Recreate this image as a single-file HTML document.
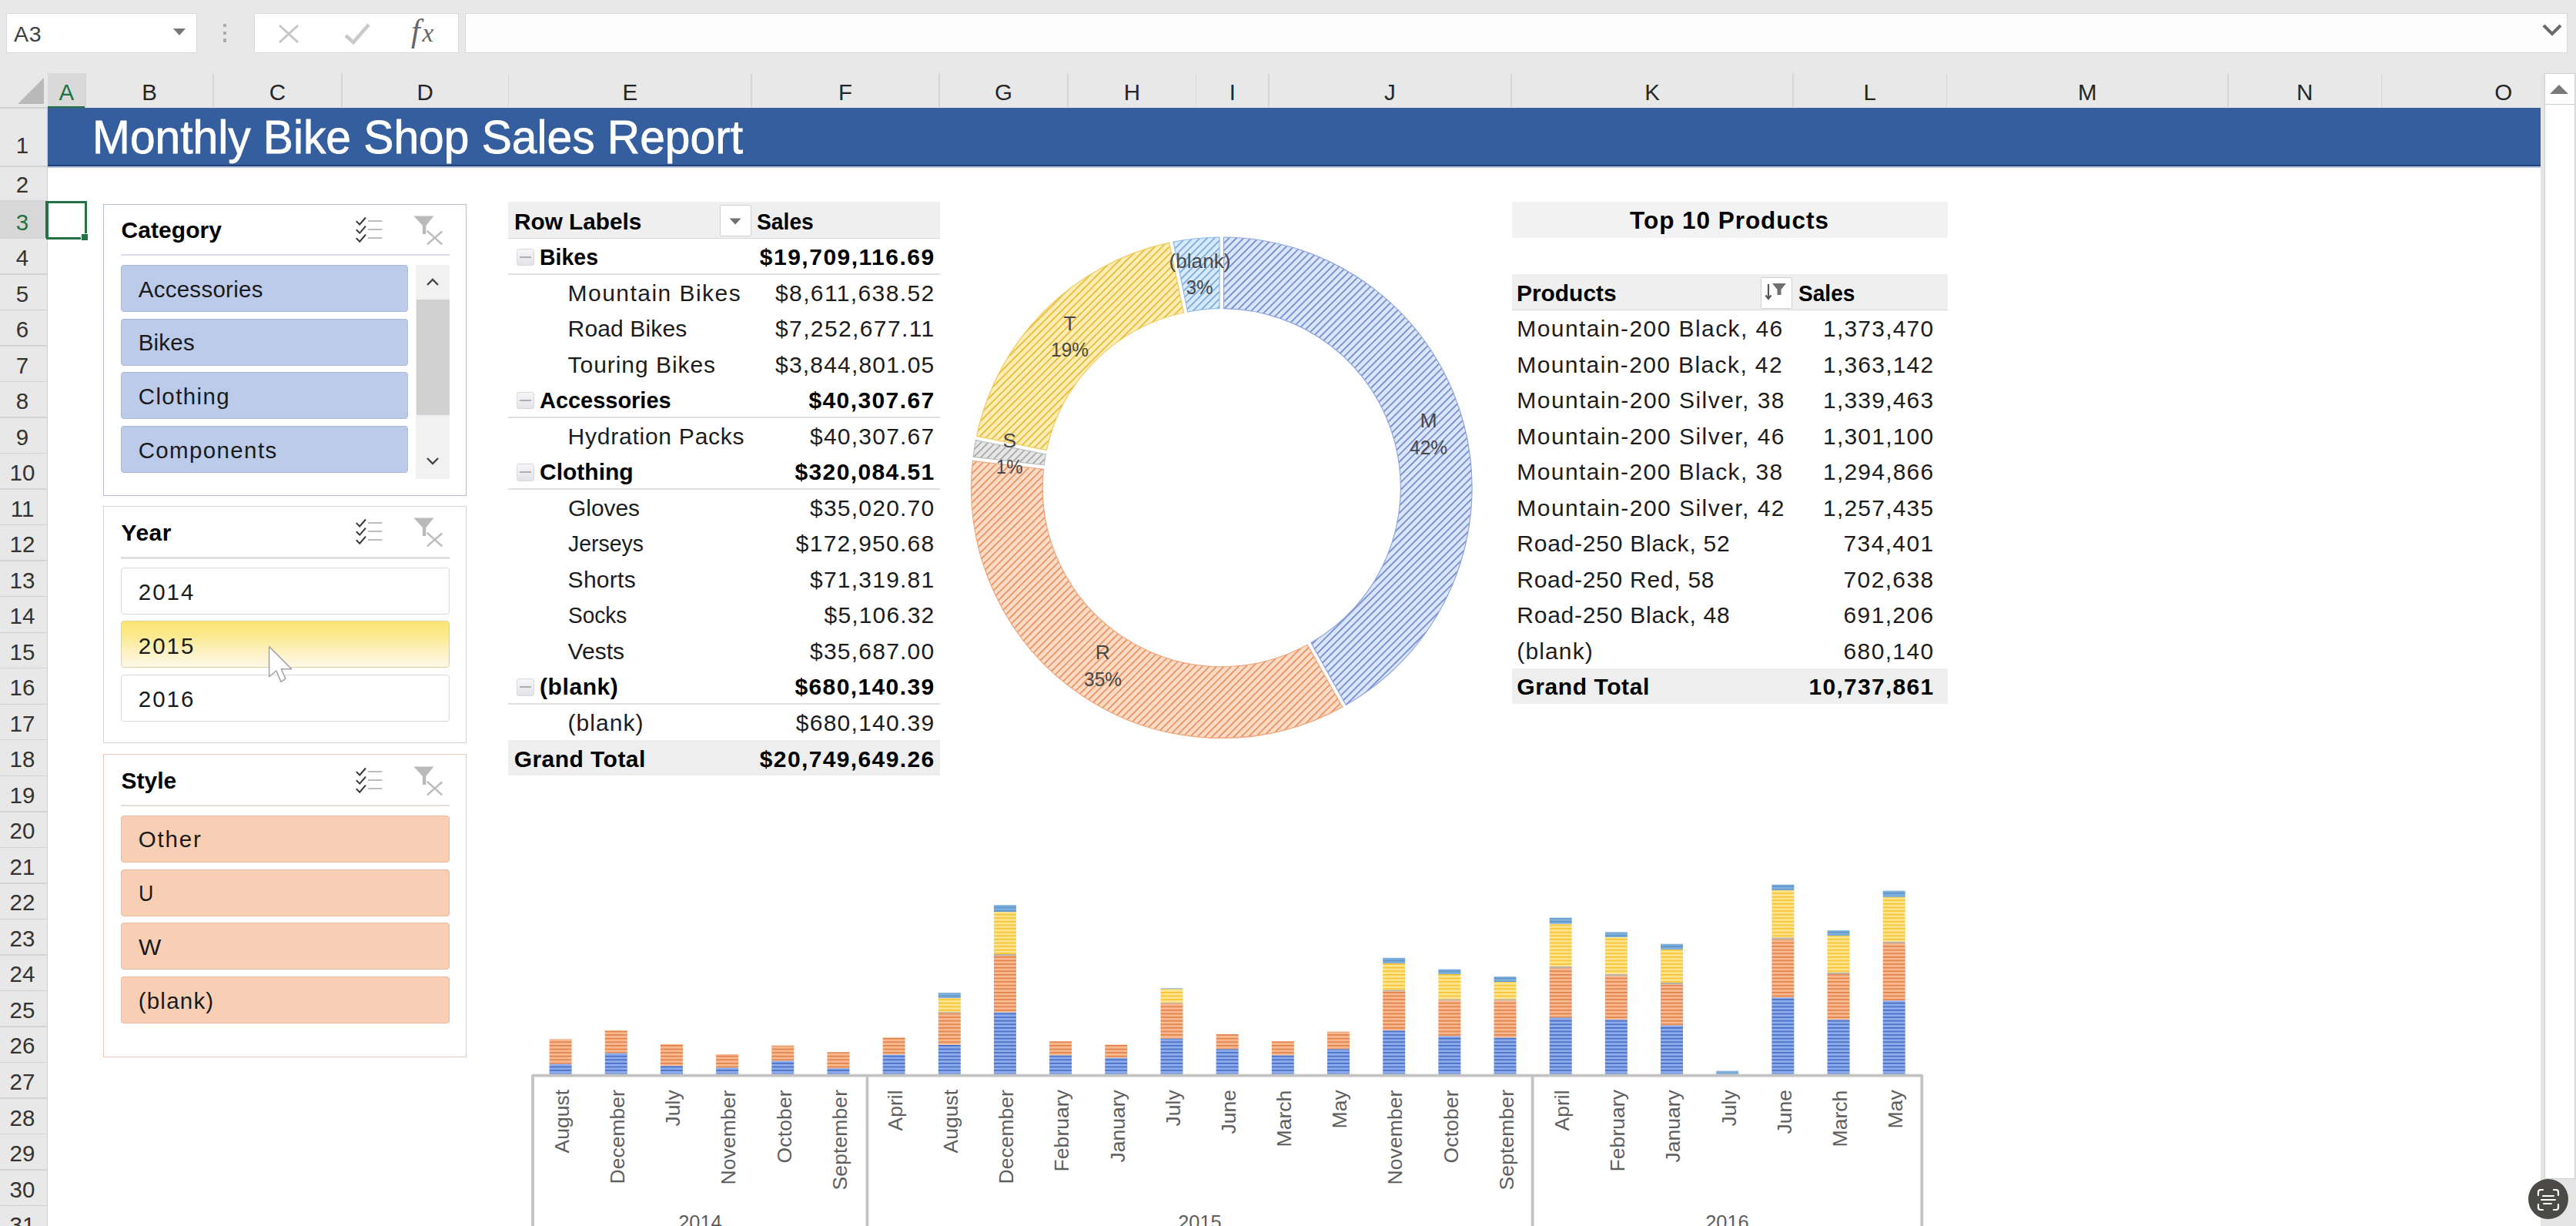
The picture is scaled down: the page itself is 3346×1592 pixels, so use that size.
<!DOCTYPE html>
<html><head><meta charset="utf-8"><title>Monthly Bike Shop Sales Report</title><style>
html,body{margin:0;padding:0;background:#fff;}
body{width:3346px;height:1592px;overflow:hidden;}
#w{position:relative;width:3346px;height:1592px;overflow:hidden;background:#fff;font-family:"Liberation Sans",sans-serif;color:#000;}
#w div,.a{position:absolute;}
.t{position:absolute;white-space:pre;line-height:1;}
</style></head><body><div id="w">
<div style="left:0.00px;top:0.00px;width:3346.00px;height:140.00px;background:#e8e8e8;"></div>
<div style="left:8.20px;top:16.60px;width:247.60px;height:52.60px;background:#fefefe;border:1.4px solid #d9d9d9;box-sizing:border-box;"></div>
<span class="t" style="top:29.62px;font-size:28.5px;left:18.00px;letter-spacing:0.640px;color:#404040;">A3</span>
<svg class="a" style="left:224px;top:36px" width="18" height="11" viewBox="0 0 18 11"><path d="M1 1h16l-8 9z" fill="#777"/></svg>
<div style="left:290.30px;top:31.00px;width:4.20px;height:4.20px;background:#ababab;border-radius:1px;"></div>
<div style="left:290.30px;top:40.60px;width:4.20px;height:4.20px;background:#ababab;border-radius:1px;"></div>
<div style="left:290.30px;top:50.40px;width:4.20px;height:4.20px;background:#ababab;border-radius:1px;"></div>
<div style="left:329.80px;top:16.60px;width:266.60px;height:52.60px;background:#fefefe;border:1.4px solid #d9d9d9;box-sizing:border-box;"></div>
<svg class="a" style="left:360px;top:30px" width="30" height="28" viewBox="0 0 30 28"><path d="M3 3L27 25M27 3L3 25" stroke="#c6c6c6" stroke-width="3" fill="none"/></svg>
<svg class="a" style="left:446px;top:29px" width="36" height="30" viewBox="0 0 36 30"><path d="M3 17L13 26L33 3" stroke="#c9c9c9" stroke-width="4.5" fill="none"/></svg>
<span class="t" style="top:19.43px;font-size:42px;left:534.00px;font-style:italic;font-family:'Liberation Serif',serif;color:#666;">f</span>
<span class="t" style="top:26.95px;font-size:33px;left:548.50px;font-style:italic;font-family:'Liberation Serif',serif;color:#666;">x</span>
<div style="left:604.20px;top:16.60px;width:2731.10px;height:52.60px;background:#fdfdfd;border:1.4px solid #d9d9d9;box-sizing:border-box;"></div>
<svg class="a" style="left:3301px;top:30px" width="28" height="18" viewBox="0 0 28 18"><path d="M3 3L14 14L25 3" stroke="#6a6a6a" stroke-width="4" fill="none"/></svg>
<div style="left:0.00px;top:95.00px;width:3300.00px;height:45.00px;background:#e8e8e8;"></div>
<svg class="a" style="left:22px;top:100px" width="36" height="36" viewBox="0 0 36 36"><path d="M35 1V35H1z" fill="#b9b9b9"/></svg>
<div style="left:61.50px;top:95.00px;width:49.50px;height:42.50px;background:#d9d9d9;"></div>
<div style="left:61.50px;top:137.50px;width:49.50px;height:2.50px;background:#217346;"></div>
<span class="t" style="top:105.03px;font-size:29.5px;left:76.41px;color:#217346;">A</span>
<div style="left:110.20px;top:95.00px;width:1.50px;height:45.00px;background:#d6d6d6;"></div>
<span class="t" style="top:105.03px;font-size:29.5px;left:184.16px;color:#262626;">B</span>
<div style="left:276.20px;top:95.00px;width:1.50px;height:45.00px;background:#d6d6d6;"></div>
<span class="t" style="top:105.03px;font-size:29.5px;left:349.85px;color:#262626;">C</span>
<div style="left:443.20px;top:95.00px;width:1.50px;height:45.00px;background:#d6d6d6;"></div>
<span class="t" style="top:105.03px;font-size:29.5px;left:541.60px;color:#262626;">D</span>
<div style="left:659.70px;top:95.00px;width:1.50px;height:45.00px;background:#d6d6d6;"></div>
<span class="t" style="top:105.03px;font-size:29.5px;left:808.41px;color:#262626;">E</span>
<div style="left:975.20px;top:95.00px;width:1.50px;height:45.00px;background:#d6d6d6;"></div>
<span class="t" style="top:105.03px;font-size:29.5px;left:1088.99px;color:#262626;">F</span>
<div style="left:1219.20px;top:95.00px;width:1.50px;height:45.00px;background:#d6d6d6;"></div>
<span class="t" style="top:105.03px;font-size:29.5px;left:1292.03px;color:#262626;">G</span>
<div style="left:1386.20px;top:95.00px;width:1.50px;height:45.00px;background:#d6d6d6;"></div>
<span class="t" style="top:105.03px;font-size:29.5px;left:1459.65px;color:#262626;">H</span>
<div style="left:1552.80px;top:95.00px;width:1.50px;height:45.00px;background:#d6d6d6;"></div>
<span class="t" style="top:105.03px;font-size:29.5px;left:1596.70px;color:#262626;">I</span>
<div style="left:1647.20px;top:95.00px;width:1.50px;height:45.00px;background:#d6d6d6;"></div>
<span class="t" style="top:105.03px;font-size:29.5px;left:1798.12px;color:#262626;">J</span>
<div style="left:1962.20px;top:95.00px;width:1.50px;height:45.00px;background:#d6d6d6;"></div>
<span class="t" style="top:105.03px;font-size:29.5px;left:2136.16px;color:#262626;">K</span>
<div style="left:2328.20px;top:95.00px;width:1.50px;height:45.00px;background:#d6d6d6;"></div>
<span class="t" style="top:105.03px;font-size:29.5px;left:2420.55px;color:#262626;">L</span>
<div style="left:2527.70px;top:95.00px;width:1.50px;height:45.00px;background:#d6d6d6;"></div>
<span class="t" style="top:105.03px;font-size:29.5px;left:2698.96px;color:#262626;">M</span>
<div style="left:2893.20px;top:95.00px;width:1.50px;height:45.00px;background:#d6d6d6;"></div>
<span class="t" style="top:105.03px;font-size:29.5px;left:2983.05px;color:#262626;">N</span>
<div style="left:3092.60px;top:95.00px;width:1.50px;height:45.00px;background:#d6d6d6;"></div>
<span class="t" style="top:105.03px;font-size:29.5px;left:3240.23px;color:#262626;">O</span>
<div style="left:0.00px;top:140.00px;width:61.50px;height:1452.00px;background:#e8e8e8;"></div>
<div style="left:60.50px;top:140.00px;width:1.20px;height:1452.00px;background:#d0d0d0;"></div>
<div style="left:0.00px;top:215.30px;width:61.50px;height:1.40px;background:#d2d2d2;"></div>
<span class="t" style="top:173.78px;font-size:29.5px;left:20.80px;color:#333;">1</span>
<div style="left:0.00px;top:260.30px;width:61.50px;height:1.40px;background:#d2d2d2;"></div>
<span class="t" style="top:225.03px;font-size:29.5px;left:20.80px;color:#333;">2</span>
<div style="left:0.00px;top:261.00px;width:60.50px;height:48.50px;background:#d7d7d7;"></div>
<div style="left:58.50px;top:261.00px;width:3.00px;height:48.50px;background:#217346;"></div>
<div style="left:0.00px;top:308.80px;width:61.50px;height:1.40px;background:#d2d2d2;"></div>
<span class="t" style="top:273.53px;font-size:29.5px;left:20.80px;color:#217346;">3</span>
<div style="left:0.00px;top:355.32px;width:61.50px;height:1.40px;background:#d2d2d2;"></div>
<span class="t" style="top:320.05px;font-size:29.5px;left:20.80px;color:#333;">4</span>
<div style="left:0.00px;top:401.84px;width:61.50px;height:1.40px;background:#d2d2d2;"></div>
<span class="t" style="top:366.57px;font-size:29.5px;left:20.80px;color:#333;">5</span>
<div style="left:0.00px;top:448.36px;width:61.50px;height:1.40px;background:#d2d2d2;"></div>
<span class="t" style="top:413.09px;font-size:29.5px;left:20.80px;color:#333;">6</span>
<div style="left:0.00px;top:494.88px;width:61.50px;height:1.40px;background:#d2d2d2;"></div>
<span class="t" style="top:459.61px;font-size:29.5px;left:20.80px;color:#333;">7</span>
<div style="left:0.00px;top:541.40px;width:61.50px;height:1.40px;background:#d2d2d2;"></div>
<span class="t" style="top:506.13px;font-size:29.5px;left:20.80px;color:#333;">8</span>
<div style="left:0.00px;top:587.92px;width:61.50px;height:1.40px;background:#d2d2d2;"></div>
<span class="t" style="top:552.65px;font-size:29.5px;left:20.80px;color:#333;">9</span>
<div style="left:0.00px;top:634.44px;width:61.50px;height:1.40px;background:#d2d2d2;"></div>
<span class="t" style="top:599.17px;font-size:29.5px;left:12.59px;color:#333;">10</span>
<div style="left:0.00px;top:680.96px;width:61.50px;height:1.40px;background:#d2d2d2;"></div>
<span class="t" style="top:645.69px;font-size:29.5px;left:13.69px;color:#333;">11</span>
<div style="left:0.00px;top:727.48px;width:61.50px;height:1.40px;background:#d2d2d2;"></div>
<span class="t" style="top:692.21px;font-size:29.5px;left:12.59px;color:#333;">12</span>
<div style="left:0.00px;top:774.00px;width:61.50px;height:1.40px;background:#d2d2d2;"></div>
<span class="t" style="top:738.73px;font-size:29.5px;left:12.59px;color:#333;">13</span>
<div style="left:0.00px;top:820.52px;width:61.50px;height:1.40px;background:#d2d2d2;"></div>
<span class="t" style="top:785.25px;font-size:29.5px;left:12.59px;color:#333;">14</span>
<div style="left:0.00px;top:867.04px;width:61.50px;height:1.40px;background:#d2d2d2;"></div>
<span class="t" style="top:831.77px;font-size:29.5px;left:12.59px;color:#333;">15</span>
<div style="left:0.00px;top:913.56px;width:61.50px;height:1.40px;background:#d2d2d2;"></div>
<span class="t" style="top:878.29px;font-size:29.5px;left:12.59px;color:#333;">16</span>
<div style="left:0.00px;top:960.08px;width:61.50px;height:1.40px;background:#d2d2d2;"></div>
<span class="t" style="top:924.81px;font-size:29.5px;left:12.59px;color:#333;">17</span>
<div style="left:0.00px;top:1006.60px;width:61.50px;height:1.40px;background:#d2d2d2;"></div>
<span class="t" style="top:971.33px;font-size:29.5px;left:12.59px;color:#333;">18</span>
<div style="left:0.00px;top:1053.12px;width:61.50px;height:1.40px;background:#d2d2d2;"></div>
<span class="t" style="top:1017.85px;font-size:29.5px;left:12.59px;color:#333;">19</span>
<div style="left:0.00px;top:1099.64px;width:61.50px;height:1.40px;background:#d2d2d2;"></div>
<span class="t" style="top:1064.37px;font-size:29.5px;left:12.59px;color:#333;">20</span>
<div style="left:0.00px;top:1146.16px;width:61.50px;height:1.40px;background:#d2d2d2;"></div>
<span class="t" style="top:1110.89px;font-size:29.5px;left:12.59px;color:#333;">21</span>
<div style="left:0.00px;top:1192.68px;width:61.50px;height:1.40px;background:#d2d2d2;"></div>
<span class="t" style="top:1157.41px;font-size:29.5px;left:12.59px;color:#333;">22</span>
<div style="left:0.00px;top:1239.20px;width:61.50px;height:1.40px;background:#d2d2d2;"></div>
<span class="t" style="top:1203.93px;font-size:29.5px;left:12.59px;color:#333;">23</span>
<div style="left:0.00px;top:1285.72px;width:61.50px;height:1.40px;background:#d2d2d2;"></div>
<span class="t" style="top:1250.45px;font-size:29.5px;left:12.59px;color:#333;">24</span>
<div style="left:0.00px;top:1332.24px;width:61.50px;height:1.40px;background:#d2d2d2;"></div>
<span class="t" style="top:1296.97px;font-size:29.5px;left:12.59px;color:#333;">25</span>
<div style="left:0.00px;top:1378.76px;width:61.50px;height:1.40px;background:#d2d2d2;"></div>
<span class="t" style="top:1343.49px;font-size:29.5px;left:12.59px;color:#333;">26</span>
<div style="left:0.00px;top:1425.28px;width:61.50px;height:1.40px;background:#d2d2d2;"></div>
<span class="t" style="top:1390.01px;font-size:29.5px;left:12.59px;color:#333;">27</span>
<div style="left:0.00px;top:1471.80px;width:61.50px;height:1.40px;background:#d2d2d2;"></div>
<span class="t" style="top:1436.53px;font-size:29.5px;left:12.59px;color:#333;">28</span>
<div style="left:0.00px;top:1518.32px;width:61.50px;height:1.40px;background:#d2d2d2;"></div>
<span class="t" style="top:1483.05px;font-size:29.5px;left:12.59px;color:#333;">29</span>
<div style="left:0.00px;top:1564.84px;width:61.50px;height:1.40px;background:#d2d2d2;"></div>
<span class="t" style="top:1529.57px;font-size:29.5px;left:12.59px;color:#333;">30</span>
<div style="left:0.00px;top:1611.36px;width:61.50px;height:1.40px;background:#d2d2d2;"></div>
<span class="t" style="top:1576.09px;font-size:29.5px;left:12.59px;color:#333;">31</span>
<div style="left:0.00px;top:139.40px;width:61.50px;height:1.40px;background:#cfcfcf;"></div>
<div style="left:61.50px;top:140.00px;width:3238.50px;height:1452.00px;background:#fff;"></div>
<div style="left:111.00px;top:138.80px;width:3189.00px;height:1.60px;background:#e3e6ef;"></div>
<div style="left:61.50px;top:140.20px;width:3238.50px;height:75.80px;background:#355e9e;"></div>
<div style="left:61.50px;top:140.20px;width:3238.50px;height:1.40px;background:#3d5f94;"></div>
<div style="left:61.50px;top:213.50px;width:3238.50px;height:2.50px;background:#1f3f75;"></div>
<div style="left:61.50px;top:216.00px;width:3238.50px;height:1.50px;background:#b8c8e4;"></div>
<span class="t" style="top:148.36px;font-size:61px;left:119.50px;transform:scaleX(0.9622);transform-origin:left center;color:#fff;-webkit-text-stroke:0.8px #fff;">Monthly Bike Shop Sales Report</span>
<div style="left:59.50px;top:260.50px;width:53.50px;height:50.50px;border:3px solid #217346;box-sizing:border-box;"></div>
<div style="left:104.50px;top:303.00px;width:10.00px;height:10.00px;background:#217346;border:1.5px solid #fff;box-sizing:border-box;"></div>
<div style="left:134.40px;top:264.90px;width:471.40px;height:378.90px;background:#fff;border:1.7px solid #b5bcda;box-sizing:border-box;"></div>
<span class="t" style="top:284.40px;font-size:30px;left:157.50px;letter-spacing:0.066px;font-weight:bold;">Category</span>
<svg class="a" style="left:462.4px;top:280.5px" width="37" height="36" viewBox="0 0 37 36"><path d="M0.8 6.1L5.2 10.5L13 1.5M0.8 17.2L5.2 21.6L13 12.6M0.8 28.3L5.2 32.7L13 23.7" stroke="#383838" stroke-width="2" fill="none"/><path d="M16 6.1H34.4M16 17H34.4M16 27.9H34.4" stroke="#bcbcbc" stroke-width="2" fill="none"/></svg>
<svg class="a" style="left:537.4px;top:279.5px" width="40" height="40" viewBox="0 0 40 40"><path d="M0.4 0.6H26.5L16.3 13V23.9H11.9V13z" fill="#b9b9b9"/><path d="M17.8 19.8L37.2 37.4M37.2 20.5L17.8 37.4" stroke="#bbbbbb" stroke-width="2.4" fill="none"/></svg>
<div style="left:157.00px;top:329.80px;width:427.00px;height:2.60px;background:#d9dbeb;"></div>
<div style="left:157.00px;top:343.70px;width:373.00px;height:61.20px;background:#bccbea;border:1.3px solid #abb8db;box-sizing:border-box;border-radius:4px;"></div>
<span class="t" style="top:360.53px;font-size:29.5px;left:179.70px;letter-spacing:0.273px;color:#1a1a1a;">Accessories</span>
<div style="left:157.00px;top:413.50px;width:373.00px;height:61.20px;background:#bccbea;border:1.3px solid #abb8db;box-sizing:border-box;border-radius:4px;"></div>
<span class="t" style="top:430.33px;font-size:29.5px;left:179.70px;letter-spacing:0.216px;color:#1a1a1a;">Bikes</span>
<div style="left:157.00px;top:483.30px;width:373.00px;height:61.20px;background:#bccbea;border:1.3px solid #abb8db;box-sizing:border-box;border-radius:4px;"></div>
<span class="t" style="top:500.13px;font-size:29.5px;left:179.70px;letter-spacing:1.395px;color:#1a1a1a;">Clothing</span>
<div style="left:157.00px;top:553.10px;width:373.00px;height:61.20px;background:#bccbea;border:1.3px solid #abb8db;box-sizing:border-box;border-radius:4px;"></div>
<span class="t" style="top:569.93px;font-size:29.5px;left:179.70px;letter-spacing:1.360px;color:#1a1a1a;">Components</span>
<div style="left:540.00px;top:343.50px;width:44.00px;height:278.00px;background:#f1f1f1;"></div>
<div style="left:540.50px;top:389.00px;width:43.00px;height:149.50px;background:#d1d1d1;"></div>
<svg class="a" style="left:553px;top:360px" width="18" height="12" viewBox="0 0 18 12"><path d="M2 10L9 3L16 10" stroke="#444" stroke-width="2.4" fill="none"/></svg>
<svg class="a" style="left:553px;top:593px" width="18" height="12" viewBox="0 0 18 12"><path d="M2 2L9 9L16 2" stroke="#444" stroke-width="2.4" fill="none"/></svg>
<div style="left:134.40px;top:657.40px;width:471.40px;height:308.10px;background:#fff;border:1.7px solid #d3d3da;box-sizing:border-box;"></div>
<span class="t" style="top:676.61px;font-size:30px;left:157.50px;letter-spacing:0.534px;font-weight:bold;">Year</span>
<svg class="a" style="left:462.4px;top:673.2px" width="37" height="36" viewBox="0 0 37 36"><path d="M0.8 6.1L5.2 10.5L13 1.5M0.8 17.2L5.2 21.6L13 12.6M0.8 28.3L5.2 32.7L13 23.7" stroke="#383838" stroke-width="2" fill="none"/><path d="M16 6.1H34.4M16 17H34.4M16 27.9H34.4" stroke="#bcbcbc" stroke-width="2" fill="none"/></svg>
<svg class="a" style="left:537.4px;top:672.2px" width="40" height="40" viewBox="0 0 40 40"><path d="M0.4 0.6H26.5L16.3 13V23.9H11.9V13z" fill="#b9b9b9"/><path d="M17.8 19.8L37.2 37.4M37.2 20.5L17.8 37.4" stroke="#bbbbbb" stroke-width="2.4" fill="none"/></svg>
<div style="left:157.00px;top:723.20px;width:427.00px;height:2.60px;background:#e0e0e0;"></div>
<div style="left:157.00px;top:736.50px;width:427.20px;height:61.20px;background:#fff;border:1.3px solid #d9d9d9;box-sizing:border-box;border-radius:4px;"></div>
<span class="t" style="top:753.83px;font-size:29.5px;left:179.70px;letter-spacing:2.041px;color:#1a1a1a;">2014</span>
<div style="left:157.00px;top:806.30px;width:427.20px;height:61.20px;border:1.3px solid #dcd09c;box-sizing:border-box;border-radius:4px;background:linear-gradient(#fae676 0%,#fbe98c 30%,#fdf3cd 75%,#fdf7e6 100%);"></div>
<span class="t" style="top:823.63px;font-size:29.5px;left:179.70px;letter-spacing:2.041px;color:#1a1a1a;">2015</span>
<div style="left:157.00px;top:876.10px;width:427.20px;height:61.20px;background:#fff;border:1.3px solid #d9d9d9;box-sizing:border-box;border-radius:4px;"></div>
<span class="t" style="top:893.43px;font-size:29.5px;left:179.70px;letter-spacing:2.041px;color:#1a1a1a;">2016</span>
<div style="left:134.40px;top:979.40px;width:471.40px;height:393.80px;background:#fff;border:1.7px solid #f1c5b3;box-sizing:border-box;"></div>
<span class="t" style="top:999.01px;font-size:30px;left:157.50px;letter-spacing:0.011px;font-weight:bold;">Style</span>
<svg class="a" style="left:462.4px;top:996.4px" width="37" height="36" viewBox="0 0 37 36"><path d="M0.8 6.1L5.2 10.5L13 1.5M0.8 17.2L5.2 21.6L13 12.6M0.8 28.3L5.2 32.7L13 23.7" stroke="#383838" stroke-width="2" fill="none"/><path d="M16 6.1H34.4M16 17H34.4M16 27.9H34.4" stroke="#bcbcbc" stroke-width="2" fill="none"/></svg>
<svg class="a" style="left:537.4px;top:995.4px" width="40" height="40" viewBox="0 0 40 40"><path d="M0.4 0.6H26.5L16.3 13V23.9H11.9V13z" fill="#b9b9b9"/><path d="M17.8 19.8L37.2 37.4M37.2 20.5L17.8 37.4" stroke="#bbbbbb" stroke-width="2.4" fill="none"/></svg>
<div style="left:157.00px;top:1044.90px;width:427.00px;height:2.60px;background:#e8dcd8;"></div>
<div style="left:157.00px;top:1058.70px;width:427.20px;height:61.20px;background:#f8cfb4;border:1.3px solid #eab9a0;box-sizing:border-box;border-radius:4px;"></div>
<span class="t" style="top:1075.13px;font-size:29.5px;left:179.70px;letter-spacing:1.868px;color:#1a1a1a;">Other</span>
<div style="left:157.00px;top:1128.50px;width:427.20px;height:61.20px;background:#f8cfb4;border:1.3px solid #eab9a0;box-sizing:border-box;border-radius:4px;"></div>
<span class="t" style="top:1144.93px;font-size:29.5px;left:179.70px;transform:scaleX(0.9106);transform-origin:left center;color:#1a1a1a;">U</span>
<div style="left:157.00px;top:1198.30px;width:427.20px;height:61.20px;background:#f8cfb4;border:1.3px solid #eab9a0;box-sizing:border-box;border-radius:4px;"></div>
<span class="t" style="top:1214.73px;font-size:29.5px;left:179.70px;transform:scaleX(1.0523);transform-origin:left center;color:#1a1a1a;">W</span>
<div style="left:157.00px;top:1268.10px;width:427.20px;height:61.20px;background:#f8cfb4;border:1.3px solid #eab9a0;box-sizing:border-box;border-radius:4px;"></div>
<span class="t" style="top:1284.53px;font-size:29.5px;left:179.70px;letter-spacing:1.221px;color:#1a1a1a;">(blank)</span>
<svg class="a" style="left:346px;top:838px" width="38" height="52" viewBox="0 0 38 52"><path d="M3.6 1.6V40.8L12.8 33L19 47.4L24.9 43.4L19.3 30.7H32.7z" fill="#fff" stroke="#a2a2a2" stroke-width="1.5" stroke-linejoin="round"/></svg>
<div style="left:660.20px;top:262.20px;width:560.50px;height:47.30px;background:#efefef;"></div>
<div style="left:660.20px;top:308.70px;width:560.50px;height:1.60px;background:#d9d9d9;"></div>
<span class="t" style="top:272.71px;font-size:30px;left:667.70px;transform:scaleX(0.9922);transform-origin:left center;font-weight:bold;">Row Labels</span>
<div style="left:934.60px;top:266.00px;width:41.40px;height:41.00px;background:#fff;border:1.3px solid #d0d0d0;box-sizing:border-box;border-radius:2px;"></div>
<svg class="a" style="left:947px;top:283px" width="16" height="9" viewBox="0 0 16 9"><path d="M0.5 0.5h15l-7.5 8z" fill="#707070"/></svg>
<span class="t" style="top:272.71px;font-size:30px;left:983.20px;transform:scaleX(0.9413);transform-origin:left center;font-weight:bold;">Sales</span>
<div style="left:671.20px;top:322.80px;width:22.60px;height:22.60px;border:1.3px solid #d8d8de;box-sizing:border-box;border-radius:3px;background:linear-gradient(#f6f6f8,#e3e3e8);"></div>
<div style="left:675.00px;top:333.10px;width:15.00px;height:1.80px;background:#adadb2;"></div>
<span class="t" style="top:319.23px;font-size:30px;left:701.00px;transform:scaleX(0.9494);transform-origin:left center;font-weight:bold;">Bikes</span>
<span class="t" style="top:319.23px;font-size:30px;left:986.80px;letter-spacing:1.501px;font-weight:bold;">$19,709,116.69</span>
<div style="left:660.20px;top:355.22px;width:560.50px;height:1.80px;background:#e0e0e0;"></div>
<span class="t" style="top:365.75px;font-size:30px;left:737.60px;letter-spacing:1.461px;color:#1c1c1c;">Mountain Bikes</span>
<span class="t" style="top:365.75px;font-size:30px;left:1007.00px;letter-spacing:1.381px;color:#1c1c1c;">$8,611,638.52</span>
<span class="t" style="top:412.27px;font-size:30px;left:737.60px;letter-spacing:0.132px;color:#1c1c1c;">Road Bikes</span>
<span class="t" style="top:412.27px;font-size:30px;left:1007.00px;letter-spacing:1.381px;color:#1c1c1c;">$7,252,677.11</span>
<span class="t" style="top:458.79px;font-size:30px;left:737.60px;letter-spacing:0.951px;color:#1c1c1c;">Touring Bikes</span>
<span class="t" style="top:458.79px;font-size:30px;left:1007.00px;letter-spacing:1.196px;color:#1c1c1c;">$3,844,801.05</span>
<div style="left:671.20px;top:508.88px;width:22.60px;height:22.60px;border:1.3px solid #d8d8de;box-sizing:border-box;border-radius:3px;background:linear-gradient(#f6f6f8,#e3e3e8);"></div>
<div style="left:675.00px;top:519.18px;width:15.00px;height:1.80px;background:#adadb2;"></div>
<span class="t" style="top:505.31px;font-size:30px;left:701.00px;transform:scaleX(0.9650);transform-origin:left center;font-weight:bold;">Accessories</span>
<span class="t" style="top:505.31px;font-size:30px;left:1050.40px;letter-spacing:1.406px;font-weight:bold;">$40,307.67</span>
<div style="left:660.20px;top:541.30px;width:560.50px;height:1.80px;background:#e0e0e0;"></div>
<span class="t" style="top:551.83px;font-size:30px;left:737.60px;letter-spacing:0.755px;color:#1c1c1c;">Hydration Packs</span>
<span class="t" style="top:551.83px;font-size:30px;left:1052.00px;letter-spacing:1.228px;color:#1c1c1c;">$40,307.67</span>
<div style="left:671.20px;top:601.92px;width:22.60px;height:22.60px;border:1.3px solid #d8d8de;box-sizing:border-box;border-radius:3px;background:linear-gradient(#f6f6f8,#e3e3e8);"></div>
<div style="left:675.00px;top:612.22px;width:15.00px;height:1.80px;background:#adadb2;"></div>
<span class="t" style="top:598.35px;font-size:30px;left:701.00px;font-weight:bold;">Clothing</span>
<span class="t" style="top:598.35px;font-size:30px;left:1032.40px;letter-spacing:1.397px;font-weight:bold;">$320,084.51</span>
<div style="left:660.20px;top:634.34px;width:560.50px;height:1.80px;background:#e0e0e0;"></div>
<span class="t" style="top:644.87px;font-size:30px;left:737.60px;transform:scaleX(0.9960);transform-origin:left center;color:#1c1c1c;">Gloves</span>
<span class="t" style="top:644.87px;font-size:30px;left:1052.00px;letter-spacing:1.228px;color:#1c1c1c;">$35,020.70</span>
<span class="t" style="top:691.39px;font-size:30px;left:737.60px;transform:scaleX(0.9472);transform-origin:left center;color:#1c1c1c;">Jerseys</span>
<span class="t" style="top:691.39px;font-size:30px;left:1033.80px;letter-spacing:1.257px;color:#1c1c1c;">$172,950.68</span>
<span class="t" style="top:737.91px;font-size:30px;left:737.60px;letter-spacing:0.279px;color:#1c1c1c;">Shorts</span>
<span class="t" style="top:737.91px;font-size:30px;left:1052.00px;letter-spacing:1.228px;color:#1c1c1c;">$71,319.81</span>
<span class="t" style="top:784.43px;font-size:30px;left:737.60px;transform:scaleX(0.9340);transform-origin:left center;color:#1c1c1c;">Socks</span>
<span class="t" style="top:784.43px;font-size:30px;left:1070.60px;letter-spacing:1.142px;color:#1c1c1c;">$5,106.32</span>
<span class="t" style="top:830.95px;font-size:30px;left:737.60px;color:#1c1c1c;">Vests</span>
<span class="t" style="top:830.95px;font-size:30px;left:1052.00px;letter-spacing:1.228px;color:#1c1c1c;">$35,687.00</span>
<div style="left:671.20px;top:881.04px;width:22.60px;height:22.60px;border:1.3px solid #d8d8de;box-sizing:border-box;border-radius:3px;background:linear-gradient(#f6f6f8,#e3e3e8);"></div>
<div style="left:675.00px;top:891.34px;width:15.00px;height:1.80px;background:#adadb2;"></div>
<span class="t" style="top:877.47px;font-size:30px;left:701.00px;letter-spacing:0.577px;font-weight:bold;">(blank)</span>
<span class="t" style="top:877.47px;font-size:30px;left:1032.40px;letter-spacing:1.397px;font-weight:bold;">$680,140.39</span>
<div style="left:660.20px;top:913.46px;width:560.50px;height:1.80px;background:#e0e0e0;"></div>
<span class="t" style="top:923.99px;font-size:30px;left:737.60px;letter-spacing:1.033px;color:#1c1c1c;">(blank)</span>
<span class="t" style="top:923.99px;font-size:30px;left:1033.80px;letter-spacing:1.257px;color:#1c1c1c;">$680,140.39</span>
<div style="left:660.20px;top:960.78px;width:560.50px;height:46.52px;background:#eeeeee;"></div>
<span class="t" style="top:970.51px;font-size:30px;left:667.70px;letter-spacing:0.449px;font-weight:bold;">Grand Total</span>
<span class="t" style="top:970.51px;font-size:30px;left:986.80px;letter-spacing:1.374px;font-weight:bold;">$20,749,649.26</span>
<div style="left:1963.50px;top:262.20px;width:566.20px;height:47.30px;background:#f2f2f2;"></div>
<span class="t" style="top:271.44px;font-size:31.5px;left:2117.10px;letter-spacing:0.954px;font-weight:bold;">Top 10 Products</span>
<div style="left:1963.50px;top:355.52px;width:566.20px;height:47.00px;background:#efefef;"></div>
<div style="left:1963.50px;top:401.74px;width:566.20px;height:1.60px;background:#d9d9d9;"></div>
<span class="t" style="top:365.75px;font-size:30px;left:1970.30px;transform:scaleX(0.9968);transform-origin:left center;font-weight:bold;">Products</span>
<div style="left:2286.90px;top:359.80px;width:41.40px;height:41.00px;background:#fff;border:1.3px solid #d0d0d0;box-sizing:border-box;border-radius:2px;"></div>
<svg class="a" style="left:2292px;top:366px" width="32" height="28" viewBox="0 0 32 28"><path d="M5 3V21M1.5 17.5L5 22L8.5 17.5" stroke="#555" stroke-width="2.2" fill="none"/><path d="M10 2H28L21.5 10V17H16.5V10z" fill="#707070"/></svg>
<span class="t" style="top:365.75px;font-size:30px;left:2335.50px;transform:scaleX(0.9362);transform-origin:left center;font-weight:bold;">Sales</span>
<span class="t" style="top:412.27px;font-size:30px;left:1970.30px;letter-spacing:1.419px;color:#1c1c1c;">Mountain-200 Black, 46</span>
<span class="t" style="top:412.27px;font-size:30px;left:2368.10px;letter-spacing:1.192px;color:#1c1c1c;">1,373,470</span>
<span class="t" style="top:458.79px;font-size:30px;left:1970.30px;letter-spacing:1.386px;color:#1c1c1c;">Mountain-200 Black, 42</span>
<span class="t" style="top:458.79px;font-size:30px;left:2368.10px;letter-spacing:1.192px;color:#1c1c1c;">1,363,142</span>
<span class="t" style="top:505.31px;font-size:30px;left:1970.30px;letter-spacing:1.455px;color:#1c1c1c;">Mountain-200 Silver, 38</span>
<span class="t" style="top:505.31px;font-size:30px;left:2368.10px;letter-spacing:1.192px;color:#1c1c1c;">1,339,463</span>
<span class="t" style="top:551.83px;font-size:30px;left:1970.30px;letter-spacing:1.455px;color:#1c1c1c;">Mountain-200 Silver, 46</span>
<span class="t" style="top:551.83px;font-size:30px;left:2368.10px;letter-spacing:1.192px;color:#1c1c1c;">1,301,100</span>
<span class="t" style="top:598.35px;font-size:30px;left:1970.30px;letter-spacing:1.419px;color:#1c1c1c;">Mountain-200 Black, 38</span>
<span class="t" style="top:598.35px;font-size:30px;left:2368.10px;letter-spacing:1.192px;color:#1c1c1c;">1,294,866</span>
<span class="t" style="top:644.87px;font-size:30px;left:1970.30px;letter-spacing:1.455px;color:#1c1c1c;">Mountain-200 Silver, 42</span>
<span class="t" style="top:644.87px;font-size:30px;left:2368.10px;letter-spacing:1.192px;color:#1c1c1c;">1,257,435</span>
<span class="t" style="top:691.39px;font-size:30px;left:1970.30px;letter-spacing:0.759px;color:#1c1c1c;">Road-250 Black, 52</span>
<span class="t" style="top:691.39px;font-size:30px;left:2394.60px;letter-spacing:1.343px;color:#1c1c1c;">734,401</span>
<span class="t" style="top:737.91px;font-size:30px;left:1970.30px;letter-spacing:0.735px;color:#1c1c1c;">Road-250 Red, 58</span>
<span class="t" style="top:737.91px;font-size:30px;left:2394.60px;letter-spacing:1.343px;color:#1c1c1c;">702,638</span>
<span class="t" style="top:784.43px;font-size:30px;left:1970.30px;letter-spacing:0.759px;color:#1c1c1c;">Road-250 Black, 48</span>
<span class="t" style="top:784.43px;font-size:30px;left:2394.60px;letter-spacing:1.343px;color:#1c1c1c;">691,206</span>
<span class="t" style="top:830.95px;font-size:30px;left:1970.30px;letter-spacing:1.133px;color:#1c1c1c;">(blank)</span>
<span class="t" style="top:830.95px;font-size:30px;left:2394.60px;letter-spacing:1.343px;color:#1c1c1c;">680,140</span>
<div style="left:1963.50px;top:867.74px;width:566.20px;height:46.52px;background:#eeeeee;"></div>
<span class="t" style="top:877.47px;font-size:30px;left:1970.30px;letter-spacing:0.589px;font-weight:bold;">Grand Total</span>
<span class="t" style="top:877.47px;font-size:30px;left:2349.60px;letter-spacing:1.261px;font-weight:bold;">10,737,861</span>
<svg class="a" style="left:0;top:0" width="3346" height="1592" viewBox="0 0 3346 1592"><defs><pattern id="hM" width="6.7" height="6.7" patternUnits="userSpaceOnUse" patternTransform="rotate(-45)"><rect width="6.7" height="6.7" fill="#dbe5fb"/><rect width="6.7" height="1.6" fill="#6684cc"/></pattern><pattern id="hR" width="6.7" height="6.7" patternUnits="userSpaceOnUse" patternTransform="rotate(-45)"><rect width="6.7" height="6.7" fill="#fcdcc8"/><rect width="6.7" height="1.6" fill="#e88a50"/></pattern><pattern id="hS" width="6.7" height="6.7" patternUnits="userSpaceOnUse" patternTransform="rotate(-45)"><rect width="6.7" height="6.7" fill="#e6e6e6"/><rect width="6.7" height="1.6" fill="#a0a0a0"/></pattern><pattern id="hT" width="6.7" height="6.7" patternUnits="userSpaceOnUse" patternTransform="rotate(-45)"><rect width="6.7" height="6.7" fill="#feeeb4"/><rect width="6.7" height="1.6" fill="#e6b52c"/></pattern><pattern id="hB" width="6.7" height="6.7" patternUnits="userSpaceOnUse" patternTransform="rotate(-45)"><rect width="6.7" height="6.7" fill="#d8e9fa"/><rect width="6.7" height="1.6" fill="#6ea4d8"/></pattern><pattern id="sM" width="8" height="4.6" patternUnits="userSpaceOnUse"><rect width="8" height="4.6" fill="#8eabeb"/><rect width="8" height="1.5" fill="#3f66c0"/></pattern><pattern id="sR" width="8" height="4.6" patternUnits="userSpaceOnUse"><rect width="8" height="4.6" fill="#f8b991"/><rect width="8" height="1.5" fill="#e07a40"/></pattern><pattern id="sT" width="8" height="4.6" patternUnits="userSpaceOnUse"><rect width="8" height="4.6" fill="#ffe48c"/><rect width="8" height="1.5" fill="#f4be28"/></pattern><pattern id="sB" width="8" height="4.6" patternUnits="userSpaceOnUse"><rect width="8" height="4.6" fill="#7fb0dc"/><rect width="8" height="1.5" fill="#5b92c8"/></pattern></defs><path d="M1589.50 308.00A325.2 325.2 0 0 1 1748.30 915.48L1702.94 834.63A232.5 232.5 0 0 0 1589.50 400.70Z" fill="url(#hM)" stroke="#8ea6de" stroke-width="1.2"/><path d="M1743.59 918.12A325.2 325.2 0 0 1 1263.44 598.50L1355.53 609.16A232.5 232.5 0 0 0 1698.23 837.28Z" fill="url(#hR)" stroke="#f0a57a" stroke-width="1.2"/><path d="M1264.07 593.14A325.2 325.2 0 0 1 1267.48 571.57L1358.35 589.89A232.5 232.5 0 0 0 1356.15 603.80Z" fill="url(#hS)" stroke="#bdbdbd" stroke-width="1.2"/><path d="M1268.55 566.28A325.2 325.2 0 0 1 1518.76 315.19L1537.40 405.99A232.5 232.5 0 0 0 1359.42 584.60Z" fill="url(#hT)" stroke="#efcb5e" stroke-width="1.2"/><path d="M1524.05 314.10A325.2 325.2 0 0 1 1584.10 308.00L1584.10 400.70A232.5 232.5 0 0 0 1542.69 404.91Z" fill="url(#hB)" stroke="#93bce4" stroke-width="1.2"/><rect x="713.59" y="1381.50" width="29" height="13.20" fill="url(#sM)"/><rect x="713.59" y="1349.40" width="29" height="32.10" fill="url(#sR)"/><rect x="785.76" y="1367.40" width="29" height="27.30" fill="url(#sM)"/><rect x="785.76" y="1338.10" width="29" height="29.30" fill="url(#sR)"/><rect x="857.93" y="1383.90" width="29" height="10.80" fill="url(#sM)"/><rect x="857.93" y="1355.80" width="29" height="28.10" fill="url(#sR)"/><rect x="930.10" y="1386.30" width="29" height="8.40" fill="url(#sM)"/><rect x="930.10" y="1369.00" width="29" height="17.30" fill="url(#sR)"/><rect x="1002.27" y="1377.40" width="29" height="17.30" fill="url(#sM)"/><rect x="1002.27" y="1357.70" width="29" height="19.70" fill="url(#sR)"/><rect x="1074.45" y="1387.10" width="29" height="7.60" fill="url(#sM)"/><rect x="1074.45" y="1366.20" width="29" height="20.90" fill="url(#sR)"/><rect x="1146.62" y="1369.40" width="29" height="25.30" fill="url(#sM)"/><rect x="1146.62" y="1347.30" width="29" height="22.10" fill="url(#sR)"/><rect x="1218.79" y="1356.60" width="29" height="38.10" fill="url(#sM)"/><rect x="1218.79" y="1315.30" width="29" height="41.30" fill="url(#sR)"/><rect x="1218.79" y="1313.80" width="29" height="1.50" fill="#b9b0a0"/><rect x="1218.79" y="1296.00" width="29" height="17.80" fill="url(#sT)"/><rect x="1218.79" y="1289.20" width="29" height="6.80" fill="url(#sB)"/><rect x="1290.96" y="1314.40" width="29" height="80.30" fill="url(#sM)"/><rect x="1290.96" y="1241.00" width="29" height="73.40" fill="url(#sR)"/><rect x="1290.96" y="1239.00" width="29" height="2.00" fill="#b9b0a0"/><rect x="1290.96" y="1184.00" width="29" height="55.00" fill="url(#sT)"/><rect x="1290.96" y="1175.20" width="29" height="8.80" fill="url(#sB)"/><rect x="1363.13" y="1370.20" width="29" height="24.50" fill="url(#sM)"/><rect x="1363.13" y="1352.10" width="29" height="18.10" fill="url(#sR)"/><rect x="1435.31" y="1373.40" width="29" height="21.30" fill="url(#sM)"/><rect x="1435.31" y="1356.50" width="29" height="16.90" fill="url(#sR)"/><rect x="1507.48" y="1348.50" width="29" height="46.20" fill="url(#sM)"/><rect x="1507.48" y="1303.10" width="29" height="45.40" fill="url(#sR)"/><rect x="1507.48" y="1302.10" width="29" height="1.00" fill="#b9b0a0"/><rect x="1507.48" y="1284.20" width="29" height="17.90" fill="url(#sT)"/><rect x="1507.48" y="1283.40" width="29" height="0.80" fill="url(#sB)"/><rect x="1579.65" y="1362.20" width="29" height="32.50" fill="url(#sM)"/><rect x="1579.65" y="1342.90" width="29" height="19.30" fill="url(#sR)"/><rect x="1651.82" y="1370.20" width="29" height="24.50" fill="url(#sM)"/><rect x="1651.82" y="1352.10" width="29" height="18.10" fill="url(#sR)"/><rect x="1723.99" y="1362.20" width="29" height="32.50" fill="url(#sM)"/><rect x="1723.99" y="1339.70" width="29" height="22.50" fill="url(#sR)"/><rect x="1796.17" y="1338.10" width="29" height="56.60" fill="url(#sM)"/><rect x="1796.17" y="1287.10" width="29" height="51.00" fill="url(#sR)"/><rect x="1796.17" y="1285.30" width="29" height="1.80" fill="#b9b0a0"/><rect x="1796.17" y="1251.00" width="29" height="34.30" fill="url(#sT)"/><rect x="1796.17" y="1243.80" width="29" height="7.20" fill="url(#sB)"/><rect x="1868.34" y="1345.30" width="29" height="49.40" fill="url(#sM)"/><rect x="1868.34" y="1299.10" width="29" height="46.20" fill="url(#sR)"/><rect x="1868.34" y="1297.30" width="29" height="1.80" fill="#b9b0a0"/><rect x="1868.34" y="1265.00" width="29" height="32.30" fill="url(#sT)"/><rect x="1868.34" y="1258.60" width="29" height="6.40" fill="url(#sB)"/><rect x="1940.51" y="1347.30" width="29" height="47.40" fill="url(#sM)"/><rect x="1940.51" y="1299.10" width="29" height="48.20" fill="url(#sR)"/><rect x="1940.51" y="1297.30" width="29" height="1.80" fill="#b9b0a0"/><rect x="1940.51" y="1275.00" width="29" height="22.30" fill="url(#sT)"/><rect x="1940.51" y="1268.20" width="29" height="6.80" fill="url(#sB)"/><rect x="2012.68" y="1321.30" width="29" height="73.40" fill="url(#sM)"/><rect x="2012.68" y="1257.10" width="29" height="64.20" fill="url(#sR)"/><rect x="2012.68" y="1254.70" width="29" height="2.40" fill="#b9b0a0"/><rect x="2012.68" y="1199.70" width="29" height="55.00" fill="url(#sT)"/><rect x="2012.68" y="1191.70" width="29" height="8.00" fill="url(#sB)"/><rect x="2084.85" y="1324.10" width="29" height="70.60" fill="url(#sM)"/><rect x="2084.85" y="1267.10" width="29" height="57.00" fill="url(#sR)"/><rect x="2084.85" y="1264.70" width="29" height="2.40" fill="#b9b0a0"/><rect x="2084.85" y="1216.90" width="29" height="47.80" fill="url(#sT)"/><rect x="2084.85" y="1210.50" width="29" height="6.40" fill="url(#sB)"/><rect x="2157.03" y="1331.30" width="29" height="63.40" fill="url(#sM)"/><rect x="2157.03" y="1278.30" width="29" height="53.00" fill="url(#sR)"/><rect x="2157.03" y="1275.90" width="29" height="2.40" fill="#b9b0a0"/><rect x="2157.03" y="1232.90" width="29" height="43.00" fill="url(#sT)"/><rect x="2157.03" y="1225.70" width="29" height="7.20" fill="url(#sB)"/><rect x="2229.20" y="1390.70" width="29" height="4.00" fill="url(#sB)"/><rect x="2301.37" y="1295.20" width="29" height="99.50" fill="url(#sM)"/><rect x="2301.37" y="1219.70" width="29" height="75.50" fill="url(#sR)"/><rect x="2301.37" y="1217.30" width="29" height="2.40" fill="#b9b0a0"/><rect x="2301.37" y="1155.90" width="29" height="61.40" fill="url(#sT)"/><rect x="2301.37" y="1148.70" width="29" height="7.20" fill="url(#sB)"/><rect x="2373.54" y="1324.10" width="29" height="70.60" fill="url(#sM)"/><rect x="2373.54" y="1265.10" width="29" height="59.00" fill="url(#sR)"/><rect x="2373.54" y="1262.70" width="29" height="2.40" fill="#b9b0a0"/><rect x="2373.54" y="1214.90" width="29" height="47.80" fill="url(#sT)"/><rect x="2373.54" y="1208.10" width="29" height="6.80" fill="url(#sB)"/><rect x="2445.71" y="1299.20" width="29" height="95.50" fill="url(#sM)"/><rect x="2445.71" y="1224.90" width="29" height="74.30" fill="url(#sR)"/><rect x="2445.71" y="1222.50" width="29" height="2.40" fill="#b9b0a0"/><rect x="2445.71" y="1164.70" width="29" height="57.80" fill="url(#sT)"/><rect x="2445.71" y="1156.70" width="29" height="8.00" fill="url(#sB)"/><path d="M692.0 1597V1396.7H2496.3V1597M1126.4 1396.7V1597M1990.6 1396.7V1597" stroke="#c3c3c3" stroke-width="3.8" fill="none" stroke-linejoin="round"/></svg>
<span class="t" style="left:738.89px;top:1475.47px;font-size:26.5px;color:#5e5e5e;letter-spacing:0.000px;transform-origin:0 22.43px;transform:rotate(-90deg);">August</span>
<span class="t" style="left:811.06px;top:1515.21px;font-size:26.5px;color:#5e5e5e;letter-spacing:0.000px;transform-origin:0 22.43px;transform:rotate(-90deg);">December</span>
<span class="t" style="left:883.23px;top:1440.09px;font-size:26.5px;color:#5e5e5e;letter-spacing:0.000px;transform-origin:0 22.43px;transform:rotate(-90deg);">July</span>
<span class="t" style="left:955.40px;top:1515.77px;font-size:26.5px;color:#5e5e5e;letter-spacing:0.080px;transform-origin:0 22.43px;transform:rotate(-90deg);">November</span>
<span class="t" style="left:1027.57px;top:1488.07px;font-size:26.5px;color:#5e5e5e;letter-spacing:0.139px;transform-origin:0 22.43px;transform:rotate(-90deg);">October</span>
<span class="t" style="left:1099.75px;top:1523.37px;font-size:26.5px;color:#5e5e5e;letter-spacing:0.096px;transform-origin:0 22.43px;transform:rotate(-90deg);">September</span>
<span class="t" style="left:1171.92px;top:1445.98px;font-size:26.5px;color:#5e5e5e;letter-spacing:0.000px;transform-origin:0 22.43px;transform:rotate(-90deg);">April</span>
<span class="t" style="left:1244.09px;top:1475.47px;font-size:26.5px;color:#5e5e5e;letter-spacing:0.000px;transform-origin:0 22.43px;transform:rotate(-90deg);">August</span>
<span class="t" style="left:1316.26px;top:1515.21px;font-size:26.5px;color:#5e5e5e;letter-spacing:0.000px;transform-origin:0 22.43px;transform:rotate(-90deg);">December</span>
<span class="t" style="left:1388.43px;top:1499.37px;font-size:26.5px;color:#5e5e5e;letter-spacing:0.051px;transform-origin:0 22.43px;transform:rotate(-90deg);">February</span>
<span class="t" style="left:1460.61px;top:1487.25px;font-size:26.5px;color:#5e5e5e;letter-spacing:0.000px;transform-origin:0 22.43px;transform:rotate(-90deg);">January</span>
<span class="t" style="left:1532.78px;top:1440.09px;font-size:26.5px;color:#5e5e5e;letter-spacing:0.000px;transform-origin:0 22.43px;transform:rotate(-90deg);">July</span>
<span class="t" style="left:1604.95px;top:1450.43px;font-size:26.5px;color:#5e5e5e;letter-spacing:0.000px;transform-origin:0 22.43px;transform:rotate(-90deg);">June</span>
<span class="t" style="left:1677.12px;top:1466.59px;font-size:26.5px;color:#5e5e5e;letter-spacing:0.000px;transform-origin:0 22.43px;transform:rotate(-90deg);">March</span>
<span class="t" style="left:1749.29px;top:1443.03px;font-size:26.5px;color:#5e5e5e;letter-spacing:0.000px;transform-origin:0 22.43px;transform:rotate(-90deg);">May</span>
<span class="t" style="left:1821.47px;top:1515.77px;font-size:26.5px;color:#5e5e5e;letter-spacing:0.080px;transform-origin:0 22.43px;transform:rotate(-90deg);">November</span>
<span class="t" style="left:1893.64px;top:1488.07px;font-size:26.5px;color:#5e5e5e;letter-spacing:0.139px;transform-origin:0 22.43px;transform:rotate(-90deg);">October</span>
<span class="t" style="left:1965.81px;top:1523.37px;font-size:26.5px;color:#5e5e5e;letter-spacing:0.096px;transform-origin:0 22.43px;transform:rotate(-90deg);">September</span>
<span class="t" style="left:2037.98px;top:1445.98px;font-size:26.5px;color:#5e5e5e;letter-spacing:0.000px;transform-origin:0 22.43px;transform:rotate(-90deg);">April</span>
<span class="t" style="left:2110.15px;top:1499.37px;font-size:26.5px;color:#5e5e5e;letter-spacing:0.051px;transform-origin:0 22.43px;transform:rotate(-90deg);">February</span>
<span class="t" style="left:2182.33px;top:1487.25px;font-size:26.5px;color:#5e5e5e;letter-spacing:0.000px;transform-origin:0 22.43px;transform:rotate(-90deg);">January</span>
<span class="t" style="left:2254.50px;top:1440.09px;font-size:26.5px;color:#5e5e5e;letter-spacing:0.000px;transform-origin:0 22.43px;transform:rotate(-90deg);">July</span>
<span class="t" style="left:2326.67px;top:1450.43px;font-size:26.5px;color:#5e5e5e;letter-spacing:0.000px;transform-origin:0 22.43px;transform:rotate(-90deg);">June</span>
<span class="t" style="left:2398.84px;top:1466.59px;font-size:26.5px;color:#5e5e5e;letter-spacing:0.000px;transform-origin:0 22.43px;transform:rotate(-90deg);">March</span>
<span class="t" style="left:2471.01px;top:1443.03px;font-size:26.5px;color:#5e5e5e;letter-spacing:0.000px;transform-origin:0 22.43px;transform:rotate(-90deg);">May</span>
<span class="t" style="top:1573.57px;font-size:26.5px;left:879.72px;transform:scaleX(0.9584);transform-origin:center center;color:#5e5e5e;">2014</span>
<span class="t" style="top:1573.57px;font-size:26.5px;left:1529.02px;transform:scaleX(0.9584);transform-origin:center center;color:#5e5e5e;">2015</span>
<span class="t" style="top:1573.57px;font-size:26.5px;left:2213.97px;transform:scaleX(0.9584);transform-origin:center center;color:#5e5e5e;">2016</span>
<span class="t" style="top:326.07px;font-size:26.5px;left:1517.50px;transform:scaleX(0.9876);transform-origin:center center;color:#484848;">(blank)</span>
<span class="t" style="top:360.37px;font-size:26.5px;left:1538.85px;transform:scaleX(0.9034);transform-origin:center center;color:#484848;">3%</span>
<span class="t" style="top:407.17px;font-size:26.5px;left:1381.51px;color:#484848;">T</span>
<span class="t" style="top:441.47px;font-size:26.5px;left:1363.08px;transform:scaleX(0.9238);transform-origin:center center;color:#484848;">19%</span>
<span class="t" style="top:533.37px;font-size:26.5px;left:1844.46px;color:#484848;">M</span>
<span class="t" style="top:567.67px;font-size:26.5px;left:1828.98px;transform:scaleX(0.9238);transform-origin:center center;color:#484848;">42%</span>
<span class="t" style="top:559.07px;font-size:26.5px;left:1302.56px;color:#484848;">S</span>
<span class="t" style="top:593.37px;font-size:26.5px;left:1292.25px;transform:scaleX(0.9034);transform-origin:center center;color:#484848;">1%</span>
<span class="t" style="top:834.27px;font-size:26.5px;left:1422.83px;color:#484848;">R</span>
<span class="t" style="top:868.57px;font-size:26.5px;left:1405.88px;transform:scaleX(0.9238);transform-origin:center center;color:#484848;">35%</span>
<div style="left:3300.00px;top:95.00px;width:46.00px;height:1497.00px;background:#e4e4e4;"></div>
<div style="left:3304.50px;top:135.00px;width:40.00px;height:1396.00px;background:#fff;border:1.3px solid #cfcfcf;box-sizing:border-box;"></div>
<div style="left:3304.50px;top:95.00px;width:40.00px;height:40.50px;background:#fff;border:1.3px solid #cfcfcf;box-sizing:border-box;"></div>
<svg class="a" style="left:3312px;top:109px" width="24" height="13" viewBox="0 0 24 13"><path d="M0 13L12 1L24 13z" fill="#7a7a7a"/></svg>
<div style="left:3283.80px;top:1531.40px;width:52.00px;height:52.00px;background:#4b4a47;border-radius:26px;"></div>
<svg class="a" style="left:3295px;top:1543px" width="30" height="30" viewBox="0 0 30 30"><path d="M2 9V5Q2 2 5 2H8M22 2H25Q28 2 28 5V9M28 21V25Q28 28 25 28H22M8 28H5Q2 28 2 25V21" stroke="#fff" stroke-width="2.2" fill="none" stroke-linecap="round"/><path d="M8 10H22M6 15H24M9 20H19" stroke="#fff" stroke-width="2" fill="none" stroke-linecap="round"/></svg>
</div></body></html>
